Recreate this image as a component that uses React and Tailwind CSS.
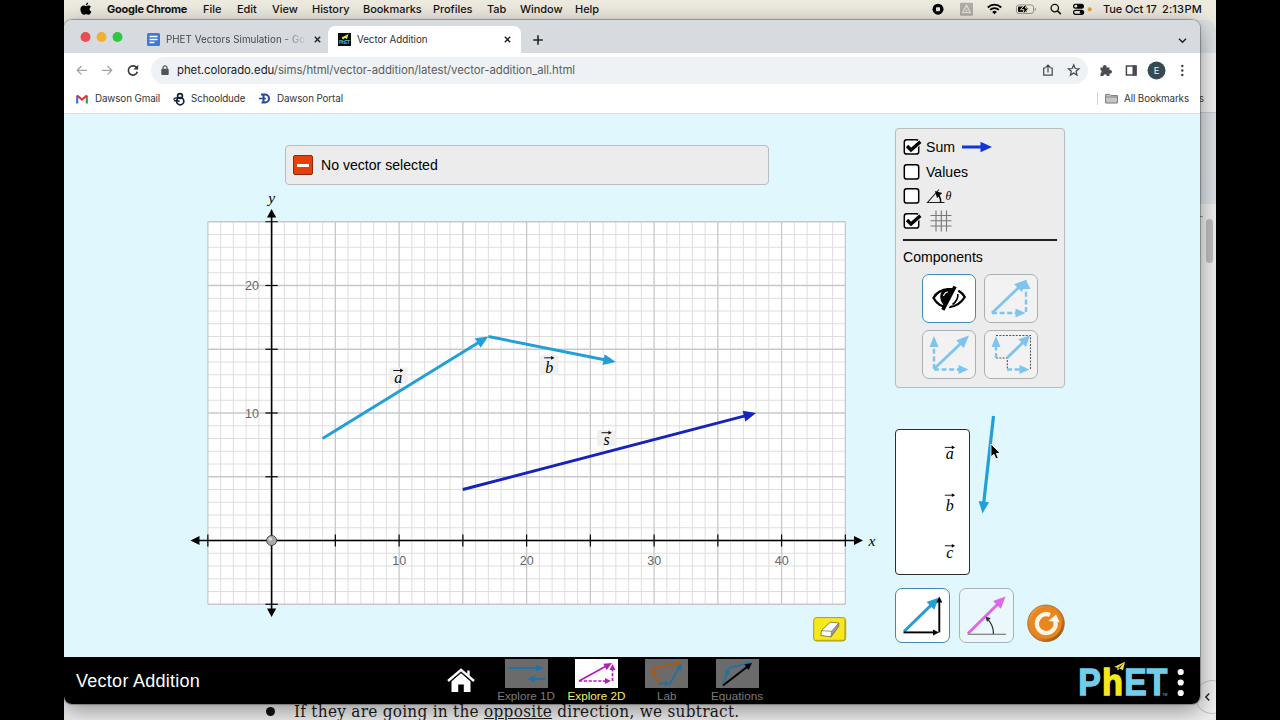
import React from "react";

function Arrow({ x1, y1, x2, y2, color, w = 3, hl = 12.5, hw = 11, dash }) {
  const len = Math.hypot(x2 - x1, y2 - y1);
  const ux = (x2 - x1) / len;
  const uy = (y2 - y1) / len;
  const bx = x2 - ux * hl;
  const by = y2 - uy * hl;
  const pts = [
    [x2, y2],
    [bx - (uy * hw) / 2, by + (ux * hw) / 2],
    [bx + (uy * hw) / 2, by - (ux * hw) / 2],
  ]
    .map((p) => p.join(","))
    .join(" ");
  return (
    <g>
      <line x1={x1} y1={y1} x2={bx + ux} y2={by + uy} stroke={color} strokeWidth={w} strokeDasharray={dash} />
      <polygon points={pts} fill={color} />
    </g>
  );
}

function VectorSymbol({ x, y, letter, size = 16, rise = 12 }) {
  return (
    <g>
      <text x={x} y={y} fontFamily="'Liberation Serif', serif" fontStyle="italic" fontSize={size} textAnchor="middle" fill="#000">
        {letter}
      </text>
      <line x1={x - 5} y1={y - rise} x2={x + 4} y2={y - rise} stroke="#000" strokeWidth="0.9" />
      <path d={`M${x + 2} ${y - rise - 1.9}L${x + 5.2} ${y - rise}L${x + 2} ${y - rise + 1.9}Z`} fill="#000" />
    </g>
  );
}

const menus = [
  ["File", "w-[34px]"],
  ["Edit", "w-[35px]"],
  ["View", "w-[40px]"],
  ["History", "w-[51px]"],
  ["Bookmarks", "w-[70px]"],
  ["Profiles", "w-[54px]"],
  ["Tab", "w-[33px]"],
  ["Window", "w-[55px]"],
  ["Help", "w-[40px]"],
];

function MenuBar() {
  return (
    <div className="flex h-[20px] w-full items-center bg-[#edeae0] pb-[2px] text-[11px] font-medium whitespace-nowrap text-[#141414]">
      <div className="w-[43px] shrink-0 pl-[16px]">
        <svg width="12" height="14" viewBox="0 0 12 14">
          <path d="M8.2 0.6C8.2 2 7.1 3.3 5.8 3.3C5.7 2 6.9 0.7 8.2 0.6ZM5.9 4.2C6.6 4.2 7.3 3.5 8.5 3.5C9.6 3.5 10.5 4 11 4.8C9 6 9.2 8.8 11.4 9.6C10.8 11.2 9.8 12.8 8.6 12.8C7.6 12.8 7.3 12.2 6.2 12.2C5.1 12.2 4.7 12.8 3.8 12.8C2.1 12.8 0.4 9.8 0.4 7.3C0.4 4.9 2 3.5 3.6 3.5C4.6 3.5 5.3 4.2 5.9 4.2Z" fill="#000" />
        </svg>
      </div>
      <span className="w-[96px] shrink-0 text-[11px] font-bold tracking-[-0.25px]">Google Chrome</span>
      {menus.map(([m, w]) => (
        <span key={m} className={`shrink-0 tracking-[-0.05px] ${w}`}>{m}</span>
      ))}
      <svg className="ml-auto shrink-0" width="170" height="18" viewBox="930 0.3 170 18">
        <circle cx="938" cy="9.5" r="5.5" fill="#000" />
        <rect x="936" y="7.5" width="4" height="4" rx="0.6" fill="#edeae0" />
        <rect x="960" y="3" width="13" height="13" rx="1" fill="#b1aea7" />
        <path d="M966.5 5.5L970.5 13H962.5Z" fill="none" stroke="#e8e5dc" strokeWidth="1.2" strokeLinejoin="round" />
        <circle cx="966.5" cy="10.7" r="1" fill="#e8e5dc" />
        <path d="M987.8 7.8A9.4 9.4 0 0 1 1001.2 7.8M990.2 10.2A6 6 0 0 1 998.8 10.2" fill="none" stroke="#000" strokeWidth="1.8" />
        <path d="M992.2 12.2A3.2 3.2 0 0 1 996.8 12.2L994.5 14.6Z" fill="#000" />
        <rect x="1016.5" y="5.2" width="17" height="8.6" rx="2.4" fill="none" stroke="#8d8a83" strokeWidth="0.9" />
        <path d="M1034.8 8v3c1.6-.5 1.6-2.5 0-3z" fill="#8d8a83" />
        <rect x="1018" y="6.7" width="9" height="5.6" rx="1" fill="#111" />
        <path d="M1026.5 3.5L1020.5 10H1024L1022.5 15.2L1029.2 8.4H1025.6Z" fill="#000" stroke="#edeae0" strokeWidth="0.9" />
        <circle cx="1054.8" cy="8.4" r="3.7" fill="none" stroke="#111" strokeWidth="1.3" />
        <path d="M1057.6 11.2L1060.8 14.4" stroke="#111" strokeWidth="1.5" />
        <rect x="1073" y="4" width="11" height="5" rx="2.5" fill="#000" />
        <circle cx="1075.8" cy="6.5" r="1.4" fill="#edeae0" />
        <rect x="1073.6" y="10.6" width="10" height="4" rx="2" fill="none" stroke="#000" strokeWidth="1.2" />
        <circle cx="1081.5" cy="12.6" r="1.8" fill="#000" />
        <circle cx="1089.7" cy="9.6" r="2.1" fill="#e0a050" />
      </svg>
      <span className="ml-[3px] w-[59px] shrink-0 tracking-[-0.1px]">Tue Oct 17</span>
      <span className="w-[54px] shrink-0 tracking-[0.1px] [word-spacing:-2.5px]">2:13 PM</span>
    </div>
  );
}

function TabBar() {
  return (
    <div className="flex h-[33px] shrink-0 items-end bg-[#d7dbdf] text-[11px] text-[#3f4246]">
      <svg className="shrink-0" width="83" height="33" viewBox="64 20 83 33">
        <circle cx="85.5" cy="37" r="5" fill="#ec4b50" />
        <circle cx="101.5" cy="37" r="5" fill="#f2b02f" />
        <circle cx="117.5" cy="37" r="5" fill="#2bc840" />
      </svg>
      <div className="flex h-[27px] w-[181px] items-center">
        <svg className="shrink-0" width="13" height="13" viewBox="0 0 13 13">
          <rect width="13" height="13" rx="1.5" fill="#3f78d8" />
          <path d="M2.5 3.5h8M2.5 6.5h8M2.5 9.5h5" stroke="#fff" strokeWidth="1.4" />
        </svg>
        <div className="ml-[6px] w-[138px] bg-gradient-to-r from-[#3f4246] from-85% to-[#3f424622] bg-clip-text pt-[2px] font-[Inter] text-[9.8px] tracking-[0.04px] whitespace-nowrap text-transparent">PHET Vectors Simulation - Go</div>
        <svg className="ml-[9px] shrink-0" width="9" height="9" viewBox="0 0 9 9"><path d="M1.8 1.8L7.2 7.2M7.2 1.8L1.8 7.2" stroke="#222" strokeWidth="1.4" /></svg>
      </div>
      <div className="flex h-[27px] w-[193px] items-center rounded-t-[7px] bg-white pl-[10px]">
        <svg className="shrink-0" width="13" height="13" viewBox="0 0 13 13">
          <rect width="13" height="13" fill="#050c10" />
          <path d="M3.5 4.5L10.5 1L9 6L7 5L5 6.5Z" fill="#e9e52c" />
          <text x="1" y="11.3" fontSize="4.8" fontWeight="bold" fontFamily="'Liberation Sans', sans-serif" fill="#54b8c8" textLength="11">PhET</text>
        </svg>
        <span className="ml-[6px] pt-[2px] text-[9.8px] tracking-[-0.06px] text-[#303235]">Vector Addition</span>
        <svg className="mr-[9px] ml-auto" width="9" height="9" viewBox="0 0 9 9"><path d="M1.8 1.8L7.2 7.2M7.2 1.8L1.8 7.2" stroke="#222" strokeWidth="1.4" /></svg>
      </div>
      <svg className="mb-[7px] ml-[11px]" width="12" height="12" viewBox="0 0 12 12"><path d="M6 1.2V10.8M1.2 6H10.8" stroke="#222" strokeWidth="1.6" /></svg>
      <svg className="mr-[13px] mb-[8px] ml-auto" width="9" height="9" viewBox="0 0 9 9"><path d="M1 2.8L4.5 6.3L8 2.8" fill="none" stroke="#222" strokeWidth="1.5" /></svg>
    </div>
  );
}

function Toolbar() {
  return (
    <div className="flex h-[34px] shrink-0 items-center bg-white">
      <svg className="shrink-0" width="87" height="34" viewBox="64 53 87 34" fill="none">
        <path d="M87 70.3H77.5M81.5 66L77.2 70.3L81.5 74.6" stroke="#a3a6a9" strokeWidth="1.3" />
        <path d="M102 70.3H111.5M107.5 66L111.8 70.3L107.5 74.6" stroke="#a3a6a9" strokeWidth="1.3" />
        <path d="M136.6 67.6A4.6 4.6 0 1 0 137.4 71.8" stroke="#35373a" strokeWidth="1.6" />
        <path d="M138.2 64.8V69.6H133.4Z" fill="#35373a" />
      </svg>
      <div className="flex h-[27px] w-[937px] items-center rounded-full bg-[#eff2f4] pl-[10px]">
        <svg className="shrink-0" width="8" height="11" viewBox="0 0 8 11">
          <rect x="0.3" y="3.8" width="7.4" height="6.2" rx="0.9" fill="#505458" />
          <path d="M2 4.5V2.8A2 2 0 0 1 6 2.8V4.5" fill="none" stroke="#505458" strokeWidth="1.2" />
        </svg>
        <span className="ml-[8px] pt-[2px] text-[11.4px] tracking-[-0.07px] whitespace-nowrap text-[#5a5e62]"><span className="text-[#1c1d1f]">phet.colorado.edu</span>/sims/html/vector-addition/latest/vector-addition_all.html</span>
        <svg className="mr-[6px] ml-auto" width="42" height="14" viewBox="1040 63.5 42 14" fill="none" stroke="#44474a" strokeWidth="1.2">
          <path d="M1045.5 68.5H1043.7V75.6H1052.2V68.5H1050.4M1048 73V65.8M1045.6 68L1048 65.6L1050.4 68" />
          <path d="M1073.7 65.3L1075.2 69L1079.1 69.3L1076.1 71.8L1077 75.6L1073.7 73.5L1070.4 75.6L1071.3 71.8L1068.3 69.3L1072.2 69Z" />
        </svg>
      </div>
      <svg className="ml-auto shrink-0" width="112" height="34" viewBox="1088 53 112 34">
        <path d="M1100.5 67.5H1103A1.9 1.9 0 1 1 1106.6 67.5H1109.5V70A1.9 1.9 0 1 1 1109.5 73.6V76H1106.8A1.7 1.7 0 0 0 1103.4 76H1100.5V73.2A1.7 1.7 0 0 0 1100.5 70Z" fill="#4a4d52" />
        <rect x="1126.4" y="66" width="9.6" height="9" fill="none" stroke="#4a4850" strokeWidth="1.5" />
        <rect x="1132.5" y="65.5" width="4" height="10" fill="#4a4850" />
        <circle cx="1156.5" cy="70.5" r="9" fill="#354a52" />
        <text x="1156.5" y="74" fontFamily="Inter, sans-serif" fontSize="9.5" fill="#f4f4f4" textAnchor="middle">E</text>
        <circle cx="1182.3" cy="66" r="1.2" fill="#3c3e41" />
        <circle cx="1182.3" cy="70.5" r="1.2" fill="#3c3e41" />
        <circle cx="1182.3" cy="75" r="1.2" fill="#3c3e41" />
      </svg>
    </div>
  );
}

function Bookmarks() {
  return (
    <div className="flex h-[27px] shrink-0 items-center border-b border-[#d9dcdd] bg-white pb-[3px] pl-[12px] text-[9.8px] tracking-[-0.1px] whitespace-nowrap text-[#333538]">
      <svg className="shrink-0" width="12" height="10" viewBox="0 0 12 10" fill="none" strokeWidth="2.2">
        <path d="M1.2 9.5V1.5" stroke="#3a74d8" />
        <path d="M10.8 9.5V1.5" stroke="#2fa24f" />
        <path d="M1.2 1.5L6 5.6L10.8 1.5" stroke="#dc3b34" />
      </svg>
      <span className="ml-[7px] w-[78px] pt-px">Dawson Gmail</span>
      <svg className="shrink-0" width="13" height="14" viewBox="0 0 13 14" fill="none" stroke="#12243a" strokeWidth="1.7">
        <circle cx="7.2" cy="9.2" r="3.6" />
        <circle cx="7" cy="4" r="2.4" />
        <path d="M0.5 7.6C2.5 4.8 5 6 7.2 6.2M1 8.6C3 9 5 8.6 6.5 9.5" strokeWidth="1.5" />
      </svg>
      <span className="ml-[5px] w-[68px] pt-px tracking-[-0.1px]">Schooldude</span>
      <svg className="shrink-0" width="12" height="11" viewBox="0 0 12 11" fill="none" stroke="#234a9c" strokeWidth="2">
        <path d="M2 1.5H6A4 4 0 0 1 6 9.5H2.5M4.5 2V9.5" />
        <path d="M0 5.5H7" strokeWidth="1.5" />
      </svg>
      <span className="ml-[6px] pt-px">Dawson Portal</span>
      <div className="mr-[7px] ml-auto h-[13px] w-px bg-[#d2d4d6]" />
      <svg className="shrink-0" width="13" height="11" viewBox="0 0 13 11">
        <path d="M0.6 1.4H4.8L6 2.6H12.4V10H0.6Z" fill="#c5c6c7" stroke="#77797b" strokeWidth="1" />
        <path d="M0.6 4H12.4" stroke="#77797b" strokeWidth="0.8" />
      </svg>
      <span className="mr-[12px] ml-[6px] w-[64px] pt-px">All Bookmarks</span>
    </div>
  );
}

const OX = 271.6;
const OY = 540.5;
const U = 12.75;
const gx = (v) => OX + v * U;
const gy = (v) => OY - v * U;
const range = (a, b) => Array.from({ length: b - a + 1 }, (_, i) => a + i);

function Graph() {
  return (
    <svg className="block" width="700" height="432" viewBox="190 185 700 432">
      <rect x={gx(-5)} y={gy(25)} width={50 * U} height={30 * U} fill="#fff" />
      {range(-5, 45).filter((v) => v % 5).map((v) => <line key={v} x1={gx(v)} x2={gx(v)} y1={gy(25)} y2={gy(-5)} stroke="#dedede" />)}
      {range(-5, 25).filter((v) => v % 5).map((v) => <line key={v} y1={gy(v)} y2={gy(v)} x1={gx(-5)} x2={gx(45)} stroke="#dedede" />)}
      {range(-1, 9).map((v) => <line key={v} x1={gx(v * 5)} x2={gx(v * 5)} y1={gy(25)} y2={gy(-5)} stroke="#c8c8c8" strokeWidth="1.3" />)}
      {range(-1, 5).map((v) => <line key={v} y1={gy(v * 5)} y2={gy(v * 5)} x1={gx(-5)} x2={gx(45)} stroke="#c8c8c8" strokeWidth="1.3" />)}
      <g fontFamily="'Liberation Sans', sans-serif" fontSize="12.5" fill="#666">
        {[10, 20, 30, 40].map((v) => <text key={v} x={gx(v) + 0.2} y="565.3" textAnchor="middle">{v}</text>)}
        <text x="259" y="290.3" textAnchor="end">20</text>
        <text x="259" y="417.8" textAnchor="end">10</text>
      </g>
      <g stroke="#000" strokeWidth="1.6">
        <line x1="198" x2="856" y1={OY} y2={OY} />
        <line x1={OX} x2={OX} y1="215" y2="611" />
        {range(-1, 9).filter((v) => v).map((v) => <line key={v} x1={gx(v * 5)} x2={gx(v * 5)} y1={OY - 6} y2={OY + 6} strokeWidth="1.2" />)}
        {range(-1, 5).filter((v) => v).map((v) => <line key={v} y1={gy(v * 5)} y2={gy(v * 5)} x1={OX - 6.2} x2={OX + 6.2} strokeWidth="1.2" />)}
      </g>
      <path d="M190.5 540.5L199.5 536V545ZM863 540.5L854 536V545ZM271.6 209L267 217.5H276.2ZM271.6 617L267 608.5H276.2Z" fill="#000" />
      <g fontFamily="'Liberation Serif', serif" fontStyle="italic" fontSize="15.5" fill="#000">
        <text x="271.6" y="203" textAnchor="middle">y</text>
        <text x="868.5" y="546.3">x</text>
      </g>
      <circle cx={OX} cy={OY} r="5" fill="#a9a9a9" stroke="#3a3a3a" strokeWidth="0.9" />
      <circle cx={OX - 1.3} cy={OY - 1.5} r="1.8" fill="#dedede" />
      <g fill="#efefef" opacity="0.9">
        <rect x="389" y="367.5" width="19" height="16.5" rx="3" />
        <rect x="540" y="355" width="19" height="20" rx="3" />
        <rect x="597" y="430" width="18.5" height="16.5" rx="3" />
      </g>
      <Arrow x1={gx(4)} y1={gy(8)} x2={gx(17)} y2={gy(16)} color="#239fd8" />
      <Arrow x1={gx(17)} y1={gy(16)} x2={gx(27)} y2={gy(14)} color="#239fd8" />
      <Arrow x1={gx(15)} y1={gy(4)} x2={gx(38)} y2={gy(10)} color="#1524bd" />
      <VectorSymbol x={398.2} y={382.5} letter="a" />
      <VectorSymbol x={549.2} y={373} letter="b" rise={15.2} />
      <VectorSymbol x={606.5} y={444.5} letter="s" rise={11.8} />
    </svg>
  );
}

function Check({ on }) {
  return (
    <svg className="shrink-0" width="20" height="18" viewBox="0 0 20 18">
      <rect x="1.3" y="1.7" width="14.4" height="14.4" rx="2.4" fill="#fff" stroke="#000" strokeWidth="1.5" />
      {on && (
        <>
          <path d="M3.8 8.2L8 12.2L17.4 3.6" fill="none" stroke="#f2f2f2" strokeWidth="5" />
          <path d="M4 8L8 12L17.4 3.8" fill="none" stroke="#000" strokeWidth="3.3" />
        </>
      )}
    </svg>
  );
}

const sky = "#7fc4ee";

function CompButton({ active, children }) {
  return (
    <div className={`h-[49px] w-[54px] overflow-hidden rounded-[7px] border ${active ? "border-[#3c8fb0] bg-white" : "border-[#acaeaf] bg-[#f2f2f2]"}`}>{children}</div>
  );
}

function ControlPanel() {
  return (
    <div className="flex h-[260px] w-[170px] flex-col rounded-[4px] border border-[#b9bcbe] bg-[#ececec] pt-[6px] pl-[7px] text-[14.1px] leading-[24px] text-black">
      <div className="flex h-[24.6px] items-center">
        <Check on />
        <span className="ml-[3px] w-[35px]">Sum</span>
        <svg width="32" height="12" viewBox="0 0 32 12"><Arrow x1={1} y1={6} x2={31} y2={6} color="#1236d8" w={3} hl={11.5} hw={10.5} /></svg>
      </div>
      <div className="flex h-[24.6px] items-center"><Check /><span className="ml-[3px]">Values</span></div>
      <div className="flex h-[24.6px] items-center">
        <Check />
        <svg className="ml-[3px]" width="28" height="18" viewBox="926 187.5 28 18">
          <path d="M939 190L927.5 203H944.5" fill="none" stroke="#222" strokeWidth="1.1" />
          <path d="M940.6 203C941 199.5 939.5 196.8 937.5 194.6" fill="none" stroke="#000" strokeWidth="1.5" />
          <path d="M935 191.6L942.2 193.6L937 198.5Z" fill="#000" />
          <text x="945.5" y="200.5" fontFamily="'Liberation Serif', serif" fontStyle="italic" fontSize="12">θ</text>
        </svg>
      </div>
      <div className="flex h-[24.6px] items-center">
        <Check on />
        <svg className="ml-[7px]" width="22" height="22" viewBox="0 0 22 22"><path d="M6 .5V21.5M11.3 .5V21.5M16.5 .5V21.5M.5 5.5H21.5M.5 10.8H21.5M.5 16H21.5" stroke="#777" strokeWidth="1.1" /></svg>
      </div>
      <div className="mt-[6px] h-[1.5px] w-[154px] bg-[#222]" />
      <div className="mt-[4.5px] h-[24.5px]">Components</div>
      <div className="mt-[4px] ml-[19px] grid w-[116px] grid-cols-2 gap-x-[8px] gap-y-[7px]">
        <CompButton active>
          <svg width="52" height="47" viewBox="923 275 52 47">
            <path d="M933.5 298C939 287.5 958 285.5 964.8 297C957 309.5 941 311 933.5 298Z" fill="none" stroke="#000" strokeWidth="2.3" />
            <path d="M942 291.5C944.5 288 950 287 953.5 288.8L944.5 305.8C940 302 939 295 942 291.5Z" fill="#000" />
            <path d="M943.5 296C944.5 293 946 292 948 292" fill="none" stroke="#fff" strokeWidth="1.2" />
            <path d="M957.8 287L945.3 310" stroke="#fff" strokeWidth="4.5" />
            <path d="M955 286.5L942.8 309.8" stroke="#000" strokeWidth="3.6" />
            <path d="M957.8 294C958.3 298 956.5 301.5 952.5 304.5" fill="none" stroke="#000" strokeWidth="1.6" />
          </svg>
        </CompButton>
        <CompButton>
          <svg width="52" height="47" viewBox="985 275 52 47">
            <Arrow x1={992} y1={313} x2={1027} y2={279.5} color={sky} w={2.8} />
            <Arrow x1={992} y1={313} x2={1025.5} y2={313} color={sky} w={2.4} hl={10} hw={9} dash="5 2.6" />
            <Arrow x1={1026} y1={312} x2={1026} y2={280} color={sky} w={2.4} hl={9} hw={9} dash="5 2.6" />
          </svg>
        </CompButton>
        <CompButton>
          <svg width="52" height="47" viewBox="923 331 52 47">
            <Arrow x1={934} y1={369} x2={969} y2={335.5} color={sky} w={2.8} />
            <Arrow x1={934} y1={369.5} x2={968.5} y2={369.5} color={sky} w={2.4} hl={10} hw={9} dash="5 2.6" />
            <Arrow x1={934} y1={369} x2={934} y2={336} color={sky} w={2.4} hl={11} hw={9} dash="5 2.6" />
          </svg>
        </CompButton>
        <CompButton>
          <svg width="52" height="47" viewBox="985 331 52 47">
            <path d="M996 335.5H1030.5V369.5M996 358H1007.3V369" fill="none" stroke="#555" strokeWidth="1.1" strokeDasharray="2 1.3" />
            <Arrow x1={1007} y1={358} x2={1030} y2={335.5} color={sky} w={2.8} hl={11} />
            <Arrow x1={1007} y1={369.5} x2={1029.5} y2={369.5} color={sky} w={2.4} hl={10} hw={9} dash="5 2.6" />
            <Arrow x1={996} y1={358} x2={996} y2={336} color={sky} w={2.4} hl={11} hw={9} dash="5 2.6" />
          </svg>
        </CompButton>
      </div>
    </div>
  );
}

function Toolbox() {
  return (
    <div className="mt-[27px] flex">
      <div className="mt-[14px] h-[146px] w-[75px] rounded-[4px] border border-[#2a2e30] bg-white">
        <svg width="73" height="144" viewBox="896 430 73 144">
          <VectorSymbol x={949.8} y={459.4} letter="a" />
          <VectorSymbol x={949.8} y={510.6} letter="b" rise={15.4} />
          <VectorSymbol x={949.8} y={557.8} letter="c" />
        </svg>
      </div>
      <svg width="40" height="110" viewBox="970 415 40 110">
        <Arrow x1={993.5} y1={416} x2={982.5} y2={513.5} color="#239fd8" w={3.2} hl={12} hw={10.5} />
        <path d="M991 444V456.8L993.9 454.3L996 458.8L998.2 457.8L996.2 453.5L1000 453Z" fill="#000" stroke="#fff" strokeWidth="0.8" />
      </svg>
    </div>
  );
}

function SceneButtons() {
  return (
    <div className="mt-[13px] flex">
      <div className="h-[55px] w-[55px] rounded-[7px] border border-[#4787ad] bg-white">
        <svg width="53" height="53" viewBox="896 589 53 53">
          <Arrow x1={904} y1={631.5} x2={939} y2={597.5} color="#239fd8" w={3} hl={12} hw={11} />
          <Arrow x1={903.5} y1={632.4} x2={939} y2={632.4} color="#000" w={1.9} hl={6} hw={6} />
          <Arrow x1={939.3} y1={632.4} x2={939.3} y2={596.5} color="#000" w={1.9} hl={6} hw={6} />
        </svg>
      </div>
      <div className="ml-[9px] h-[55px] w-[55px] rounded-[7px] border border-[#a3b4bd] bg-[#eaf7fb]">
        <svg width="53" height="53" viewBox="960 589 53 53">
          <path d="M967.5 634.2H1006" stroke="#666" strokeWidth="1.1" />
          <Arrow x1={968} y1={633.5} x2={1005.5} y2={596.5} color="#db6ae8" w={3} hl={12} hw={11} />
          <path d="M993.5 634C993.5 627 991.5 623 987.5 618.8" fill="none" stroke="#333" strokeWidth="1.2" />
          <path d="M985.5 616.8L990.8 618L987 622Z" fill="#333" />
        </svg>
      </div>
      <svg className="mt-[15px] ml-[12px]" width="40" height="40" viewBox="1026 604 40 40">
        <defs>
          <linearGradient id="reset" x1="0" y1="0" x2="1" y2="1"><stop offset="0" stopColor="#f6b877" /><stop offset="0.25" stopColor="#e98a24" /><stop offset="0.65" stopColor="#d87a1a" /><stop offset="1" stopColor="#7a3e06" /></linearGradient>
        </defs>
        <circle cx="1046" cy="624.3" r="18.3" fill="url(#reset)" stroke="#96633a" strokeWidth="0.8" />
        <circle cx="1046" cy="624.1" r="15.8" fill="#e8871f" />
        <path d="M1050 616A9.4 9.4 0 1 0 1055.3 622" fill="none" stroke="#fbf6ea" strokeWidth="4.2" />
        <path d="M1048.5 622L1056 615.5L1059.6 623.3Z" fill="#fbf6ea" />
      </svg>
    </div>
  );
}

function Sim() {
  return (
    <div className="flex h-[543px] shrink-0 bg-[#e0f8fd] pl-[126px] font-['Liberation_Sans',sans-serif]">
      <div className="flex w-[700px] shrink-0 flex-col pt-[31px]">
        <div className="ml-[95px] flex h-[40px] w-[484px] shrink-0 items-center rounded-[4px] border border-[#b9bdbf] bg-[#ececec] pl-[7px] text-[14.1px] text-black">
          <div className="flex h-[20px] w-[20px] items-center justify-center rounded-[2px] border border-[#8c2b05] bg-[#e83f0a]"><div className="h-[3px] w-[12px] bg-white" /></div>
          <span className="ml-[8px] pt-[1px]">No vector selected</span>
        </div>
        <div className="h-[432px] shrink-0"><Graph /></div>
        <svg className="ml-[623px] shrink-0" width="34" height="25" viewBox="813 617 34 25">
          <rect x="813.7" y="617.6" width="32" height="23.4" rx="3" fill="#f7e71d" stroke="#a89c17" strokeWidth="1" />
          <path d="M845 620V638.5A2 2 0 0 1 843 640.3H816" fill="none" stroke="#b9ac14" strokeWidth="1.3" />
          <path d="M821.5 630.6L830.2 622.2L838.8 623L838 627L831 636.8L820.8 635.5Z" fill="#fff" stroke="#6c6a3a" strokeWidth="0.8" strokeLinejoin="round" />
          <path d="M831.5 631.3L838.8 623V626.5L831 636.8Z" fill="#9a9a9a" stroke="#6c6a3a" strokeWidth="0.6" />
          <path d="M821.5 630.6L831.5 631.3" stroke="#6c6a3a" strokeWidth="0.7" />
        </svg>
      </div>
      <div className="ml-[5px] flex w-[175px] shrink-0 flex-col pt-[14px]">
        <ControlPanel />
        <Toolbox />
        <SceneButtons />
      </div>
    </div>
  );
}

function NavItem({ label, active, children }) {
  return (
    <div className={`flex w-[70.3px] flex-col items-center text-[11.7px] leading-[14px] whitespace-nowrap ${active ? "text-[#f2ee6a]" : "text-[#7b7b7b]"}`}>
      <svg className={active ? "bg-white" : "bg-[#6b6b6b]"} width="43" height="29" viewBox="0 0 43 29">{children}</svg>
      <span className="mt-[1px]">{label}</span>
    </div>
  );
}

function Footer() {
  const b = "#2272a0";
  return (
    <div className="flex h-[47px] shrink-0 bg-black pl-[12px] font-['Liberation_Sans',sans-serif]">
      <div className="w-[371px] pt-[12px] text-[18px] leading-[24px] tracking-[0.27px] text-white">Vector Addition</div>
      <svg className="mt-[11px] shrink-0" width="28" height="25" viewBox="0 0 28 25">
        <path d="M4.5 13L14 4.5L23.5 13V24H16.8V16.5H11.2V24H4.5Z" fill="#fff" />
        <path d="M1 13L14 1.8L27 13M21.5 7.5V2.5" fill="none" stroke="#fff" strokeWidth="2.4" />
        <path d="M2.8 14.3L14 4.7L25.2 14.3" fill="none" stroke="#000" strokeWidth="1" />
      </svg>
      <div className="ml-[16px] flex pt-[2px]">
        <NavItem label="Explore 1D">
          <Arrow x1={3} y1={9} x2={39} y2={9} color={b} w={1.9} hl={8} hw={7} />
          <Arrow x1={40} y1={20} x2={22} y2={20} color={b} w={1.9} hl={8} hw={7} />
        </NavItem>
        <NavItem label="Explore 2D" active>
          <Arrow x1={4} y1={22} x2={37} y2={4} color="#b51cc0" w={1.7} hl={8} hw={7} />
          <Arrow x1={4} y1={22} x2={36} y2={22} color="#b51cc0" w={1.7} hl={6} hw={6} dash="3.2 1.6" />
          <Arrow x1={37.5} y1={22} x2={37.5} y2={5} color="#b51cc0" w={1.7} hl={6} hw={6} dash="3.2 1.6" />
        </NavItem>
        <NavItem label="Lab">
          <Arrow x1={7} y1={9.5} x2={37} y2={3.5} color="#a8581a" w={1.8} hl={7} hw={6} />
          <Arrow x1={14} y1={24} x2={6.5} y2={9.5} color="#a8581a" w={1.8} hl={6} hw={6} />
          <Arrow x1={14} y1={24.5} x2={25} y2={24.5} color={b} w={1.8} hl={5} hw={6} />
          <Arrow x1={25} y1={24.5} x2={36.5} y2={4.5} color={b} w={1.8} hl={6} hw={6} />
        </NavItem>
        <NavItem label="Equations">
          <Arrow x1={7} y1={25} x2={13} y2={9} color={b} w={1.8} hl={6} hw={6} />
          <Arrow x1={13} y1={9} x2={36} y2={3.5} color={b} w={1.8} hl={6} hw={6} />
          <Arrow x1={7} y1={26.5} x2={36} y2={4} color="#000" w={2} hl={7} hw={7} />
        </NavItem>
      </div>
      <svg className="mr-[10px] ml-auto shrink-0" width="112" height="47" viewBox="1078 657 112 47">
        <g fontFamily="'Liberation Sans', sans-serif" fontWeight="bold" fontSize="37" fill="#72cdec" stroke="#72cdec" strokeWidth="1.3">
          <text x="1078.2" y="695.3" textLength="22.6" lengthAdjust="spacingAndGlyphs">P</text>
          <text x="1102" y="695.3" fill="#f6e917" stroke="#f6e917" textLength="21" lengthAdjust="spacingAndGlyphs">h</text>
          <text x="1124.2" y="695.3" textLength="43" lengthAdjust="spacingAndGlyphs">ET</text>
        </g>
        <path d="M1111 671L1114.5 664.5L1126 660.5L1124 671Z" fill="#000" />
        <path d="M1114 667L1125 661.8L1123 670.2L1119.8 668.4L1117.5 670.5L1117.3 667.8Z" fill="#e9e13a" />
        <path d="M1117.8 668L1123.5 663.5L1119.5 668.5Z" fill="#222" />
        <text x="1162.5" y="695.8" fontSize="3.4" fill="#72cdec" fontFamily="'Liberation Sans', sans-serif">TM</text>
        <circle cx="1180.7" cy="672" r="3.1" fill="#fff" />
        <circle cx="1180.7" cy="682.5" r="3.1" fill="#fff" />
        <circle cx="1180.7" cy="693" r="3.1" fill="#fff" />
      </svg>
    </div>
  );
}

function BackWindow() {
  return (
    <div className="absolute top-[20px] left-0 flex h-[700px] w-[1152px] flex-col overflow-hidden rounded-[10px] bg-[#f0f0f0]">
      <div className="h-[33px] shrink-0 bg-[#dce1e4]" />
      <div className="flex h-[60px] shrink-0 items-end justify-end border-b border-[#c9cccd] bg-[#f2f2f2] pr-[12px] pb-[6px] text-[10px] text-[#444]">s</div>
      <div className="h-[91px] shrink-0 bg-[#dde3e6]" />
      <div className="flex shrink-0 justify-end pt-[15px] pr-[3px]">
        <div className="mt-[-3px] mr-[3px] h-px w-[10px] bg-[#999]" />
        <div className="h-[44px] w-[7px] rounded-full bg-[#bdbfc0]" />
      </div>
    </div>
  );
}

export default function App() {
  return (
    <div className="flex h-[720px] w-[1280px] justify-center overflow-hidden bg-black font-[Inter,sans-serif]">
      <div className="relative h-[720px] w-[1152px] overflow-hidden bg-[#edeae0]">
        <MenuBar />
        <BackWindow />
        <div className="absolute bottom-[-2px] left-[202px] flex items-center font-['DejaVu_Serif',serif] text-[17px] leading-[22px] tracking-[0.27px] whitespace-nowrap text-[#1c1c1c] [font-stretch:condensed]">
          <span className="mr-[19px] h-[9px] w-[9px] rounded-full bg-[#111]" />
          <span>If they are going in the <span className="underline">opposite</span> direction, we subtract.</span>
        </div>
        <div className="absolute top-[680px] left-[1131px] flex h-[34px] w-[34px] items-center rounded-full border border-[#c4c4c4] bg-[#f0f0f0] pl-[8px]">
          <svg width="7" height="10" viewBox="0 0 7 10"><path d="M5.2 1.5L1.8 5L5.2 8.5" fill="none" stroke="#222" strokeWidth="1.4" /></svg>
        </div>
        <div className="absolute top-[20px] left-0 flex h-[684px] w-[1136px] flex-col overflow-hidden rounded-[8px] shadow-[0_6px_22px_2px_rgba(0,0,0,0.36),0_0_1px_1px_rgba(0,0,0,0.3)]">
          <TabBar />
          <Toolbar />
          <Bookmarks />
          <Sim />
          <Footer />
        </div>
      </div>
    </div>
  );
}
